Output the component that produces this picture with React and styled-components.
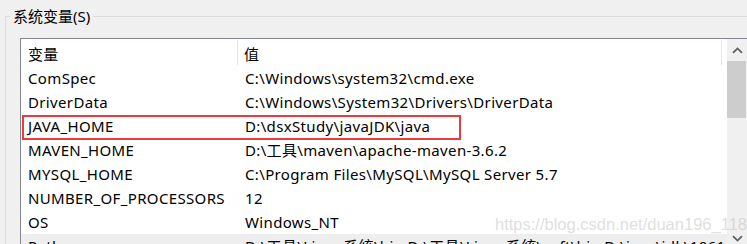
import React from 'react';
import styled, { createGlobalStyle } from 'styled-components';

const rows = [
  { name: 'ComSpec', value: 'C:\\Windows\\system32\\cmd.exe' },
  { name: 'DriverData', value: 'C:\\Windows\\System32\\Drivers\\DriverData' },
  { name: 'JAVA_HOME', value: 'D:\\dsxStudy\\javaJDK\\java', marked: true },
  { name: 'MAVEN_HOME', value: 'D:\\工具\\maven\\apache-maven-3.6.2' },
  { name: 'MYSQL_HOME', value: 'C:\\Program Files\\MySQL\\MySQL Server 5.7' },
  { name: 'NUMBER_OF_PROCESSORS', value: '12' },
  { name: 'OS', value: 'Windows_NT' },
  {
    name: 'Path',
    value: 'D:\\工具\\Linux系统\\bin;D:\\工具\\Linux系统\\soft\\bin;D:\\java\\jdk\\10614)',
    selected: true,
  },
];

const Chevron = ({ down }) => (
  <svg width="11" height="7" viewBox="0 0 11 7" fill="none">
    <path
      d={down ? 'M1 1.2L5.5 5.6L10 1.2' : 'M1 5.8L5.5 1.4L10 5.8'}
      stroke="#606060"
      strokeWidth="1.8"
    />
  </svg>
);

const App = () => {
  return (
    <>
      <GlobalStyle />
      <Page>
        <Group>
          <Legend>系统变量(S)</Legend>
          <ListBox>
            <Table>
              <HeaderRow>
                <HeadCell $width={217}>变量</HeadCell>
                <HeadCell $width={486}>值</HeadCell>
              </HeaderRow>
              {rows.map((r) => (
                <Row key={r.name} $selected={r.selected}>
                  <Cell $width={218}>{r.name}</Cell>
                  <Cell>{r.value}</Cell>
                  {r.marked && <Mark />}
                </Row>
              ))}
            </Table>
            <ScrollBar>
              <ArrowButton>
                <Chevron />
              </ArrowButton>
              <Thumb />
              <Track />
              <ArrowButton>
                <Chevron down />
              </ArrowButton>
            </ScrollBar>
          </ListBox>
        </Group>
        <Watermark>https://blog.csdn.net/duan196_118</Watermark>
      </Page>
    </>
  );
};

export default App;

const GlobalStyle = createGlobalStyle`
  html, body {
    margin: 0;
    padding: 0;
    background: #f0f0f0;
    overflow: hidden;
  }
  body {
    font-family: "Noto Sans", "Noto Sans CJK SC", sans-serif;
    font-size: 15px;
    color: #000;
  }
`;

const Page = styled.div`
  position: relative;
  width: 747px;
  height: 244px;
  overflow: hidden;
  padding-top: 6px;
  box-sizing: border-box;
`;

const Group = styled.fieldset`
  margin: 0 0 0 5px;
  padding: 2px 0 0 14px;
  border: none;
  border-top: 1px solid #dcdcdc;
  border-left: 1px solid #dcdcdc;
  min-width: 0;
`;

const Legend = styled.legend`
  margin-left: -10px;
  padding: 0 3px 0 3px;
  line-height: 20px;
  font-size: 15px;
`;

const ListBox = styled.div`
  display: flex;
  margin-top: 10px;
  width: 740px;
  height: 210px;
  border-top: 1px solid #828790;
  border-left: 1px solid #828790;
  background: #fff;
  overflow: hidden;
  letter-spacing: 0.35px;
`;

const Table = styled.div`
  position: relative;
  width: 706px;
  flex: none;
`;

const HeaderRow = styled.div`
  display: flex;
  height: 27px;
  align-items: stretch;
`;

const HeadCell = styled.div`
  width: ${(p) => p.$width}px;
  flex: none;
  padding-left: 7px;
  box-sizing: border-box;
  line-height: 28px;
  border-right: 1px solid #e5e5e5;
  margin: 1px 0 1px 0;
  white-space: nowrap;
  &:last-child {
    padding-left: 6px;
    width: ${(p) => p.$width - 2}px;
  }
`;

const Row = styled.div`
  position: relative;
  display: flex;
  height: 24px;
  line-height: 24px;
  background: ${(p) => (p.$selected ? '#eeeeee' : 'transparent')};
`;

const Cell = styled.div`
  width: ${(p) => (p.$width ? `${p.$width}px` : 'auto')};
  flex: ${(p) => (p.$width ? 'none' : '1')};
  padding-left: ${(p) => (p.$width ? '7px' : '6px')};
  box-sizing: border-box;
  white-space: nowrap;
  overflow: hidden;
`;

const Mark = styled.div`
  position: absolute;
  left: 1px;
  top: 1px;
  width: 439px;
  height: 25px;
  border: 2px solid #ee3a3e;
  box-sizing: border-box;
  pointer-events: none;
`;

const Watermark = styled.div`
  position: absolute;
  left: 495px;
  top: 215px;
  font-family: "Liberation Sans", Arial, sans-serif;
  font-size: 16.5px;
  color: rgba(195, 195, 195, 0.55);
  white-space: nowrap;
`;

const ScrollBar = styled.div`
  width: 20px;
  flex: none;
  display: flex;
  flex-direction: column;
  background: #f0f0f0;
`;

const ArrowButton = styled.div`
  height: 22px;
  display: flex;
  align-items: center;
  justify-content: center;
`;

const Thumb = styled.div`
  height: 57px;
  margin: 0 1px 0 0;
  background: #cdcdcd;
`;

const Track = styled.div`
  flex: 1;
`;
